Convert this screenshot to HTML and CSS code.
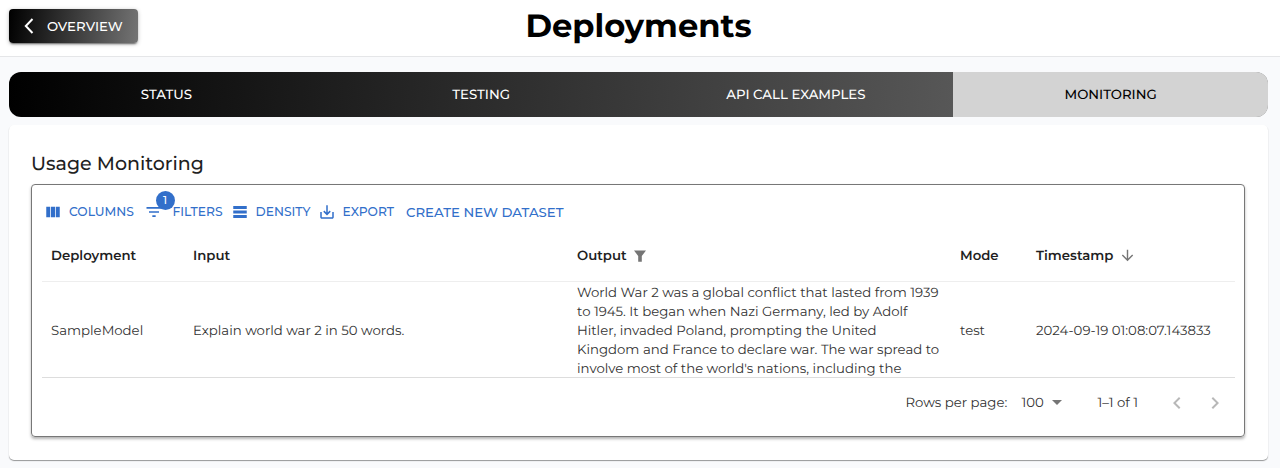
FILE: index.html
```html
<!DOCTYPE html>
<html lang="en">
<head>
<meta charset="utf-8">
<title>Deployments</title>
<link rel="stylesheet" href="styles.css">
</head>
<body>
<header class="topbar">
  <button class="back"><svg width="10" height="16" viewBox="0 0 10 16"><path d="M8.5 1 1.8 8l6.7 7" fill="none" stroke="#fff" stroke-width="2"/></svg><span>OVERVIEW</span></button>
  <h1 class="title"><span>Deployments</span></h1>
</header>
<main class="content">
  <nav class="tabs">
    <a class="tab"><span>STATUS</span></a>
    <a class="tab"><span>TESTING</span></a>
    <a class="tab"><span>API CALL EXAMPLES</span></a>
    <a class="tab active"><span>MONITORING</span></a>
  </nav>
  <section class="card">
    <h2 class="heading"><span>Usage Monitoring</span></h2>
    <div class="paper">
      <div class="toolbar">
        <button class="tool columns"><svg width="18" height="18" viewBox="0 0 24 24"><path d="M14.67 5v14H9.33V5h5.34zm1 14H21V5h-5.33v14zm-7.34 0V5H3v14h5.33z"/></svg><span>COLUMNS</span></button>
        <button class="tool filters"><span class="badged"><svg width="20" height="20" viewBox="0 0 24 24"><path d="M10 18h4v-2h-4v2zM3 6v2h18V6H3zm3 7h12v-2H6v2z"/></svg><b class="badge">1</b></span><span>FILTERS</span></button>
        <button class="tool density"><svg width="18" height="18" viewBox="0 0 24 24"><path d="M21 8H3V4h18v4zm0 2H3v4h18v-4zm0 6H3v4h18v-4z"/></svg><span>DENSITY</span></button>
        <button class="tool export"><svg width="18" height="18" viewBox="0 0 24 24"><path d="M19 12v7H5v-7H3v7c0 1.1.9 2 2 2h14c1.1 0 2-.9 2-2v-7h-2zm-6 .67 2.59-2.58L17 11.5l-5 5-5-5 1.41-1.41L11 12.67V3h2v9.67z"/></svg><span>EXPORT</span></button>
        <button class="tool create"><span>CREATE NEW DATASET</span></button>
      </div>
      <div class="grid head">
        <div>Deployment</div>
        <div>Input</div>
        <div>Output<svg class="funnel" width="14" height="14" viewBox="0 0 14 14"><path d="M1 1.5h12L8.8 7v5.7H5.2V7z"/></svg></div>
        <div>Mode</div>
        <div>Timestamp<svg class="sort" width="17" height="17" viewBox="0 0 24 24"><path d="m20 12-1.41-1.41L13 16.17V4h-2v12.17l-5.58-5.59L4 12l8 8 8-8z"/></svg></div>
      </div>
      <div class="grid row">
        <div>SampleModel</div>
        <div>Explain world war 2 in 50 words.</div>
        <div class="output">World War 2 was a global conflict that lasted from 1939 to 1945. It began when Nazi Germany, led by Adolf Hitler, invaded Poland, prompting the United Kingdom and France to declare war. The war spread to involve most of the world's nations, including the</div>
        <div>test</div>
        <div>2024-09-19 01:08:07.143833</div>
      </div>
      <footer class="pager">
        <span>Rows per page:</span>
        <span>100</span>
        <svg class="caret" width="10" height="5" viewBox="0 0 10 5"><path d="M0 0h10L5 5z"/></svg>
        <span>1–1 of 1</span>
        <svg class="arrow" width="24" height="24" viewBox="1 0 24 24"><path d="M15.41 7.41 14 6l-6 6 6 6 1.41-1.41L10.83 12z"/></svg>
        <svg class="arrow" width="24" height="24" viewBox="1 0 24 24"><path d="M10 6 8.59 7.41 13.17 12l-4.58 4.59L10 18l6-6z"/></svg>
      </footer>
    </div>
  </section>
</main>
</body>
</html>
```
FILE: styles.css
```css
* { box-sizing: border-box; }
body { margin: 0; height: 468px; overflow: hidden; background: #f9fafc; font-family: Montserrat, Inter, sans-serif; font-size: 13.27px; color: #1f1f1f; text-rendering: geometricPrecision; }
button { font: inherit; border: 0; background: none; padding: 0; margin: 0; }
span { white-space: nowrap; }
svg { display: block; flex: none; }
.topbar { height: 57px; background: #fff; border-bottom: 1px solid #e5e6e8; display: grid; grid-template-columns: 128.5px 1fr 128.5px; padding: 0 12px 0 9px; align-items: start; }
.back { margin-top: 9px; height: 34px; border-radius: 4px; background: linear-gradient(98deg, #000, #747474); color: #fff; display: flex; align-items: center; padding-left: 15px; gap: 13px; font-weight: 500; box-shadow: 0 2px 2px -1px rgba(0,0,0,.5), 0 1px 4px rgba(0,0,0,.25); }
.title { margin: 0; text-align: center; font-size: 32.2px; font-weight: 700; line-height: 53px; color: #000; }
.content { padding: 15px 12px 0 9px; }
.tabs { height: 45px; display: grid; grid-template-columns: repeat(4, 1fr); border-radius: 12px; overflow: hidden; background: linear-gradient(95deg, #000, #747474); }
.tab { display: flex; align-items: center; justify-content: center; color: #fff; font-weight: 500; }
.tab.active { background: #d3d3d3; color: #000; }
.card { margin-top: 8px; height: 335px; background: #fff; border-radius: 5px; padding: 26px 23px 0 22px; box-shadow: 0 1px 1px rgba(0,0,0,.4); }
.heading { margin: 0; height: 33px; line-height: 25px; font-size: 19px; font-weight: 500; }
.paper { height: 253px; border: 1px solid #777; border-radius: 4px; padding: 0 9px 0 10px; box-shadow: 0 2px 3px rgba(0,0,0,.3); }
.toolbar { height: 44px; padding: 9px 0 0 1.5px; display: flex; align-items: center; color: #326fca; font-size: 12.3px; font-weight: 500; fill: #326fca; }
.tool { display: flex; align-items: center; height: 30px; color: inherit; }
.columns { width: 100px; gap: 7.5px; }
.filters { width: 87px; gap: 9px; }
.density { width: 87px; gap: 7px; }
.export { width: 88.5px; gap: 7px; }
.create { font-size: 13.27px; }
.badged { position: relative; }
.badge { position: absolute; left: 12px; top: -11px; width: 19px; height: 19px; border-radius: 50%; background: #326fca; color: #fff; font-size: 11px; font-weight: 500; line-height: 19px; text-align: center; }
.grid { display: grid; grid-template-columns: 142px 384px 383px 76px 1fr; padding-left: 9px; align-items: center; }
.grid > div { display: flex; align-items: center; }
.head { height: 53px; padding-top: 1px; font-weight: 600; border-bottom: 1px solid #eee; }
.row { height: 96px; padding-top: 1px; border-bottom: 1px solid #ddd; color: #333; }
.grid > .output { display: block; width: 363px; line-height: 19px; padding-top: 1px; }
.funnel { margin-left: 6px; fill: #757575; }
.sort { margin-left: 6px; fill: #757575; }
.pager { height: 49px; display: grid; grid-template-columns: 116px 30px 46px 68px 38px 28px; justify-content: end; align-items: center; color: #333; fill: #757575; padding-right: 3.5px; }
.arrow { fill: #b8b8b8; }
```
